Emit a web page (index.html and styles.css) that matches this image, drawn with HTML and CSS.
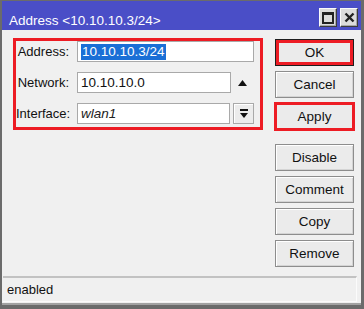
FILE: index.html
```html
<!DOCTYPE html>
<html lang="en">
<head>
  <meta charset="UTF-8">
  <title>Address &lt;10.10.10.3/24&gt;</title>
  <link rel="stylesheet" href="styles.css">
</head>
<body>
<div class="window">
  <div class="titlebar">
    <span class="title">Address &lt;10.10.10.3/24&gt;</span>
    <div class="controls">
      <button class="ctl" title="Maximize">
        <svg width="12" height="12" viewBox="0 0 12 12"><rect x="1" y="1" width="10" height="10" fill="none" stroke="#222" stroke-width="2"/><rect x="0" y="0" width="12" height="3" fill="#222"/></svg>
      </button>
      <button class="ctl" title="Close">
        <svg width="11" height="11" viewBox="0 0 11 11"><path d="M1.5 1.5l8 8M9.5 1.5l-8 8" stroke="#222" stroke-width="2.4"/></svg>
      </button>
    </div>
  </div>

  <div class="content">
    <div class="form">
      <div class="row">
        <label class="label">Address:</label>
        <div class="field field-wide"><span class="sel">10.10.10.3/24</span></div>
      </div>
      <div class="row">
        <label class="label">Network:</label>
        <div class="field field-mid">10.10.10.0</div>
        <span class="spin">
          <svg width="9" height="6" viewBox="0 0 9 6"><polygon points="0,6 9,6 4.5,0" fill="#111"/></svg>
        </span>
      </div>
      <div class="row">
        <label class="label">Interface:</label>
        <div class="field field-short"><i>wlan1</i></div>
        <span class="drop">
          <svg width="8" height="10" viewBox="0 0 8 10"><rect width="8" height="2" fill="#111"/><polygon points="0,4 8,4 4,9" fill="#111"/></svg>
        </span>
      </div>
    </div>

    <div class="actions">
      <button class="btn default">OK</button>
      <button class="btn">Cancel</button>
      <button class="btn mark">Apply</button>
      <button class="btn spaced">Disable</button>
      <button class="btn">Comment</button>
      <button class="btn">Copy</button>
      <button class="btn">Remove</button>
    </div>
  </div>

  <div class="footer">
    <div class="status">enabled</div>
  </div>
</div>
</body>
</html>
```

FILE: styles.css
```css
* {
  box-sizing: border-box;
}
body {
  margin: 0;
  font-family: "Liberation Sans", Arial, sans-serif;
  font-size: 13px;
  color: #111;
  background: #f0f0f0;
}
.window {
  width: 364px;
  height: 309px;
  border-style: solid;
  border-color: #6b6b6b;
  border-width: 1px 3px 4px 2px;
  background: #f0f0f0;
  display: flex;
  flex-direction: column;
}
.titlebar {
  height: 29px;
  flex: none;
  background: #4a4ec7;
  color: #fff;
  display: flex;
  padding: 0 3px 0 7px;
}
.title {
  flex: 1;
  align-self: flex-end;
  font-size: 13.5px;
  line-height: 15px;
  margin-bottom: 2px;
}
.controls {
  display: flex;
  gap: 3px;
  align-self: flex-end;
  margin-bottom: 3px;
}
.ctl {
  width: 18px;
  height: 19px;
  padding: 0;
  border: 1px solid;
  border-color: #fafafa #3c3c3c #3c3c3c #fafafa;
  box-shadow: inset -1px -1px #a8a8a8;
  background: #dcdcdc;
  display: flex;
  align-items: center;
  justify-content: center;
}
.content {
  flex: 1;
  display: flex;
  align-items: flex-start;
  padding: 11px 0 0 14px;
}
.form {
  width: 244px;
  padding: 0 6px 3px 0;
  display: flex;
  flex-direction: column;
  gap: 10px;
  outline: 3px solid #ed1c24;
}
.row {
  display: flex;
  align-items: center;
}
.label {
  width: 53px;
  margin-right: 8px;
  text-align: right;
  white-space: nowrap;
}
.field {
  height: 21px;
  border: 1px solid #a9a9a9;
  background: #fff;
  padding: 0 3px;
  display: flex;
  align-items: center;
  font-size: 13.5px;
  white-space: nowrap;
}
.field i {
  color: #222;
}
.field-wide {
  width: 177px;
}
.field-mid {
  width: 154px;
}
.field-short {
  width: 153px;
}
.sel {
  background: #1a6fd6;
  color: #fff;
  line-height: 16px;
  padding: 0 1px;
}
.spin {
  width: 23px;
  height: 21px;
  display: flex;
  align-items: center;
  justify-content: center;
}
.drop {
  width: 21px;
  height: 21px;
  margin-left: 3px;
  border: 1px solid #a9a9a9;
  background: #ececec;
  box-shadow: inset 1px 1px #fff;
  display: flex;
  align-items: center;
  justify-content: center;
}
.actions {
  width: 79px;
  margin: -2px 0 0 15px;
  display: flex;
  flex-direction: column;
  gap: 5px;
}
.btn {
  height: 27px;
  width: 79px;
  padding: 0;
  border: 1px solid #8d8d8d;
  background: #ebebeb;
  box-shadow: inset 1px 1px #fff, inset -1px -1px #d4d4d4;
  font-family: inherit;
  font-size: 13.5px;
  color: #111;
}
.btn.default {
  border-color: #1e1e1e;
  box-shadow: inset 0 0 0 3px #ed1c24;
}
.btn.mark {
  outline: 3px solid #ed1c24;
  outline-offset: -2px;
}
.btn.spaced {
  margin-top: 9px;
}
.footer {
  flex: none;
  padding: 0 4px 1px 1px;
  border-bottom: 2px solid #a2a2a2;
}
.status {
  height: 26px;
  border-top: 2px solid #c2c2c2;
  border-bottom: 1px solid #fbfbfb;
  border-right: 1px solid #fbfbfb;
  padding-left: 4px;
  line-height: 23px;
}
```
